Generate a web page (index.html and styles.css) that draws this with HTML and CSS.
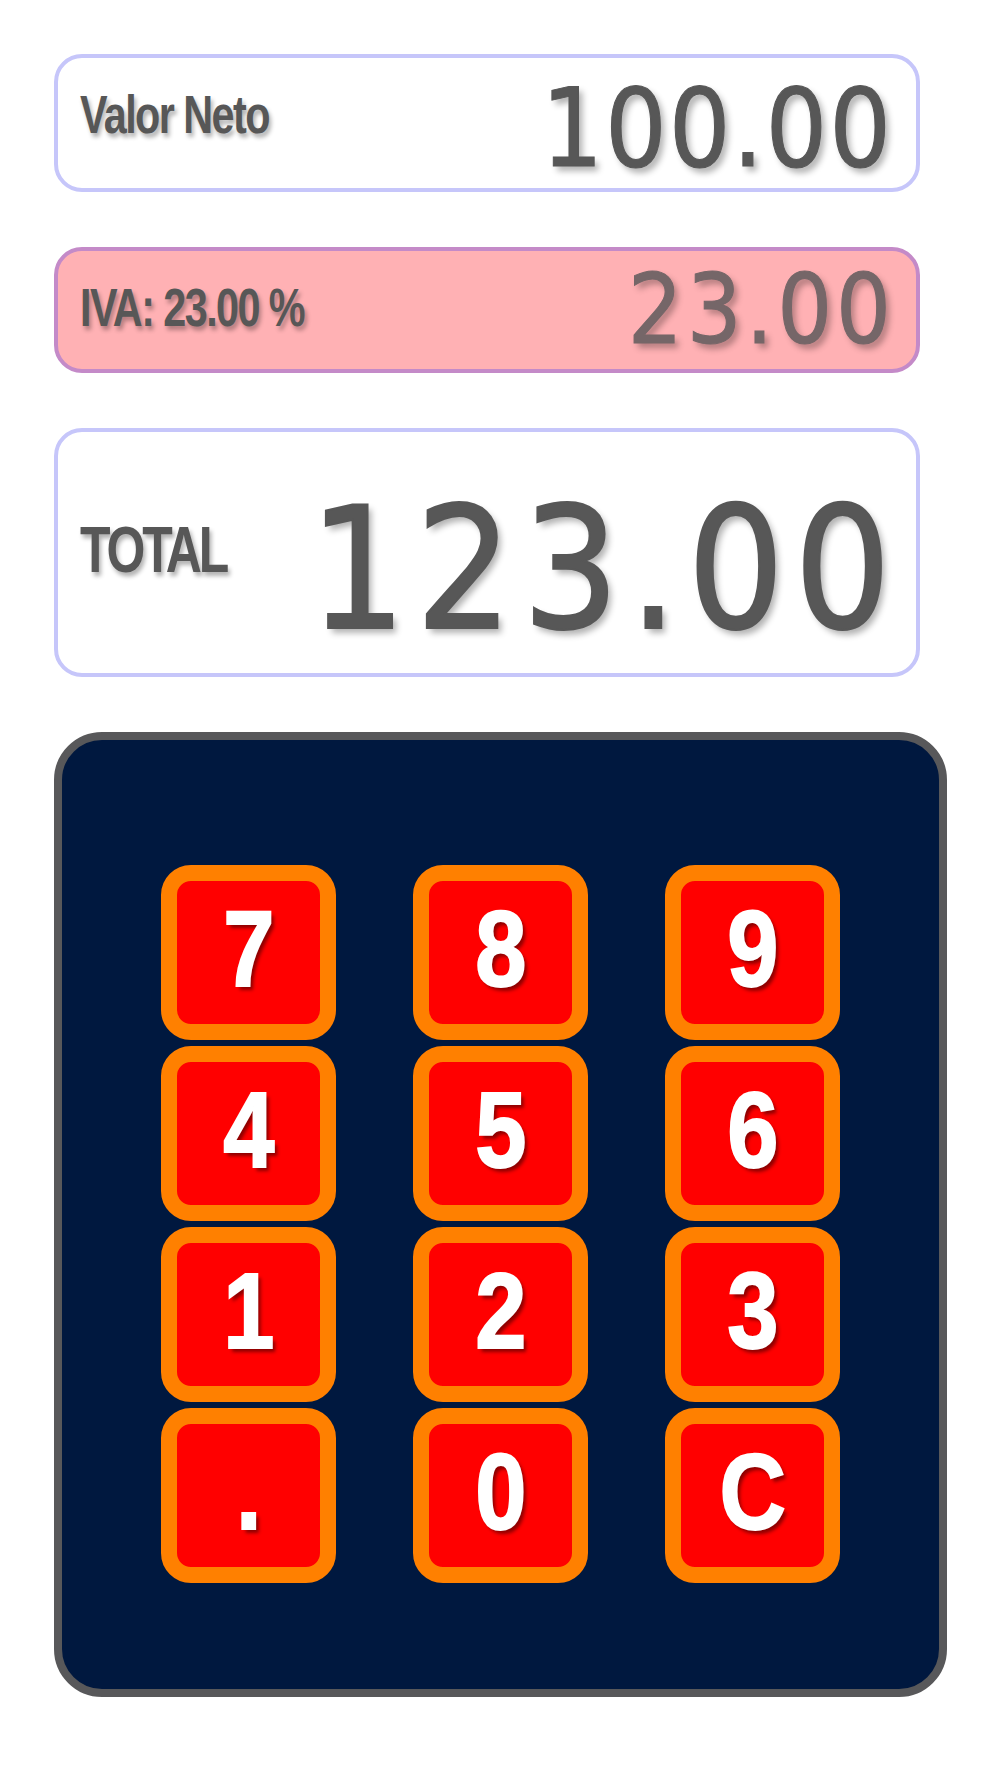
FILE: index.html
```html
<!DOCTYPE html>
<html lang="es">
<head>
  <meta charset="UTF-8" />
  <meta name="viewport" content="width=device-width, initial-scale=1.0" />
  <title>Calculadora IVA</title>
  <link rel="stylesheet" href="styles.css">
</head>
<body>
  <div class="calc">
    <div class="display neto">
      <span class="label">Valor Neto</span>
      <span class="value" id="neto">100.00</span>
    </div>

    <div class="display iva">
      <span class="label">IVA: 23.00 %</span>
      <span class="value" id="iva">23.00</span>
    </div>

    <div class="display total">
      <span class="label">TOTAL</span>
      <span class="value" id="total">123.00</span>
    </div>

    <div class="keypad">
      <button class="key"><span>7</span></button>
      <button class="key"><span>8</span></button>
      <button class="key"><span>9</span></button>
      <button class="key"><span>4</span></button>
      <button class="key"><span>5</span></button>
      <button class="key"><span>6</span></button>
      <button class="key"><span>1</span></button>
      <button class="key"><span>2</span></button>
      <button class="key"><span>3</span></button>
      <button class="key"><span>.</span></button>
      <button class="key"><span>0</span></button>
      <button class="key"><span>C</span></button>
    </div>
  </div>
</body>
</html>
```

FILE: styles.css
```css
body { margin: 0; background: #fff; }
.calc { display: flex; flex-direction: column; gap: 55px; padding: 54px 0 80px 54px; }

.display { width: 866px; box-sizing: border-box; display: flex; justify-content: space-between; align-items: center; border: 4px solid #c6c6fa; border-radius: 28px; background: #fff; padding: 0 25px 0 22px; color: #575757; }
/* narrow bold look: no condensed Arial here, so squeeze the bold one */
.label { display: inline-block; transform: scaleX(0.78); transform-origin: left center; font-family: "Liberation Sans", Arial, sans-serif; font-weight: bold; font-size: 53px; line-height: 1; letter-spacing: -2px; white-space: nowrap; text-shadow: 3px 4px 5px rgba(0, 0, 0, 0.3); }
.value { font-family: "DejaVu Sans Condensed", "DejaVu Sans", sans-serif; line-height: 1; -webkit-text-stroke: 1px currentColor; text-shadow: 4px 5px 6px rgba(0, 0, 0, 0.3); }

.neto { height: 138px; }
.neto .label { margin-bottom: 17px; }
.neto .value { font-size: 108px; letter-spacing: 2px; margin: 11px -2px 0 0; }

.iva { height: 126px; background: #ffb1b4; border-color: #c48ac8; }
.iva .label { margin-bottom: 5px; }
.iva .value { font-size: 96px; letter-spacing: 4px; margin-right: -4px; color: #756668; }

.total { height: 249px; }
.total .label { font-size: 64px; letter-spacing: -4px; margin-bottom: 5px; }
.total .value { font-size: 169px; letter-spacing: 10px; margin: 34px -10px 0 0; -webkit-text-stroke: 2px currentColor; }

.keypad { width: 893px; height: 965px; box-sizing: border-box; border: 8px solid #58585a; border-radius: 48px; background: #00183f; padding: 125px 0 0; display: grid; grid-template-columns: repeat(3, 175px); grid-auto-rows: 175px; column-gap: 77px; row-gap: 6px; justify-content: center; align-content: start; }
.key { box-sizing: border-box; border: 16px solid #ff8000; border-radius: 30px; background: #ff0000; color: #fff; padding: 0 0 7px; font-family: "Liberation Sans", Arial, sans-serif; font-weight: bold; font-size: 107px; line-height: 1; -webkit-text-stroke: 2px #fff; text-shadow: 4px 4px 4px rgba(0, 0, 0, 0.45); cursor: pointer; }
.key span { display: inline-block; transform: scaleX(0.86); }
```
